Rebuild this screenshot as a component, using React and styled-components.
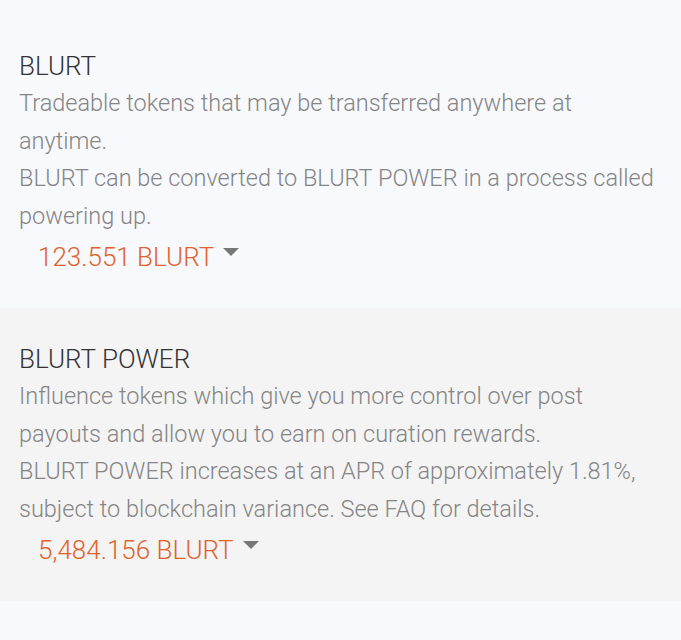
import React from "react";
import styled, { createGlobalStyle } from "styled-components";

const GlobalStyle = createGlobalStyle`
  html, body {
    margin: 0;
    padding: 0;
    background: #f8f9fc;
    font-family: Roboto, "Liberation Sans", sans-serif;
  }
`;

const balances = [
  {
    title: "BLURT",
    lines: [
      "Tradeable tokens that may be transferred anywhere at anytime.",
      "BLURT can be converted to BLURT POWER in a process called powering up.",
    ],
    amount: "123.551 BLURT",
  },
  {
    title: "BLURT POWER",
    lines: [
      "Influence tokens which give you more control over post payouts and allow you to earn on curation rewards.",
      "BLURT POWER increases at an APR of approximately 1.81%, subject to blockchain variance. See FAQ for details.",
    ],
    amount: "5,484.156 BLURT",
    shaded: true,
  },
];

const Wallet = () => {
  return (
    <Page>
      <GlobalStyle />
      {balances.map((item) => (
        <Section key={item.title} shaded={item.shaded}>
          <Title>{item.title}</Title>
          <Desc>
            {item.lines.map((line) => (
              <div key={line}>{line}</div>
            ))}
          </Desc>
          <Amount>
            {item.amount}
            <Caret />
          </Amount>
        </Section>
      ))}
    </Page>
  );
};

const Page = styled.div`
  padding-top: 15px;
  min-height: 640px;
  box-sizing: border-box;
  background: #f8f9fc;
`;

const Section = styled.section.withConfig({
  shouldForwardProp: (p) => p !== "shaded",
})`
  padding: 32px 24px 33px 19px;
  background: ${(p) => (p.shaded ? "#f4f4f4" : "#f8f9fc")};
`;

const Title = styled.div`
  font-size: 26px;
  font-weight: 300;
  line-height: 38px;
  color: #333;
`;

const Desc = styled.div`
  font-size: 23.5px;
  font-weight: 300;
  line-height: 37.5px;
  color: #858585;
`;

const Amount = styled.div`
  display: flex;
  align-items: center;
  margin: 4px 0 0 19px;
  font-size: 26px;
  font-weight: 300;
  line-height: 36px;
  color: #e0622c;
`;

const Caret = styled.span`
  display: inline-block;
  margin-left: 9px;
  margin-top: -10px;
  width: 0;
  height: 0;
  border-left: 8px solid transparent;
  border-right: 8px solid transparent;
  border-top: 8px solid #777;
`;

export default Wallet;
